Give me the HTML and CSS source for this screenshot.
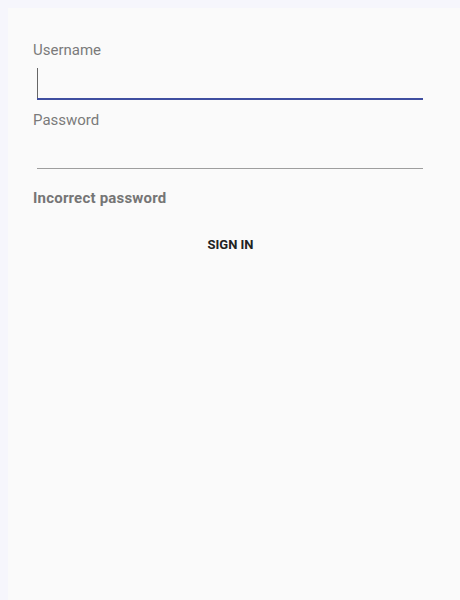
FILE: index.html
```html
<!DOCTYPE html>
<html>
<head>
<meta charset="utf-8">
<link rel="stylesheet" href="styles.css">
</head>
<body>
<div class="screen">
  <form class="form">
    <label class="label">Username</label>
    <div class="field field-active"><span class="cursor"></span></div>
    <label class="label">Password</label>
    <div class="field"></div>
    <p class="error">Incorrect password</p>
    <div class="actions"><button type="button" class="btn">SIGN IN</button></div>
  </form>
</div>
</body>
</html>
```

FILE: styles.css
```css
html, body {
  margin: 0;
  padding: 0;
  height: 100%;
  background: #f6f6fc;
}
body {
  padding: 8px 0 0 8px;
  box-sizing: border-box;
  font-family: Roboto, "Noto Sans", sans-serif;
}
.screen {
  background: #fafafa;
  height: 100%;
}
.form {
  padding: 33px 37px 0 25px;
  display: flex;
  flex-direction: column;
}
.label {
  font-size: 15px;
  line-height: 18px;
  color: #7a7a7a;
}
.field {
  margin: 8px 0 0 4px;
  height: 31px;
  border-bottom: 1px solid #9e9e9e;
  position: relative;
}
.field-active {
  margin-top: 9px;
  border-bottom: 2px solid #3f4ea0;
  height: 30px;
}
.field + .label { margin-top: 11px; }
.cursor {
  position: absolute;
  left: 0;
  top: 0;
  width: 1px;
  height: 30px;
  background: #666;
}
.error {
  margin: 20px 0 0 0;
  font-size: 15px;
  line-height: 18px;
  font-weight: bold;
  color: #757575;
  letter-spacing: 0.2px;
}
.actions {
  display: flex;
  justify-content: center;
  margin-top: 30px;
  padding-left: 5px;
}
.btn {
  background: none;
  border: none;
  padding: 0;
  font-family: Roboto, sans-serif;
  font-weight: bold;
  font-size: 13px;
  color: #222;
}
```
